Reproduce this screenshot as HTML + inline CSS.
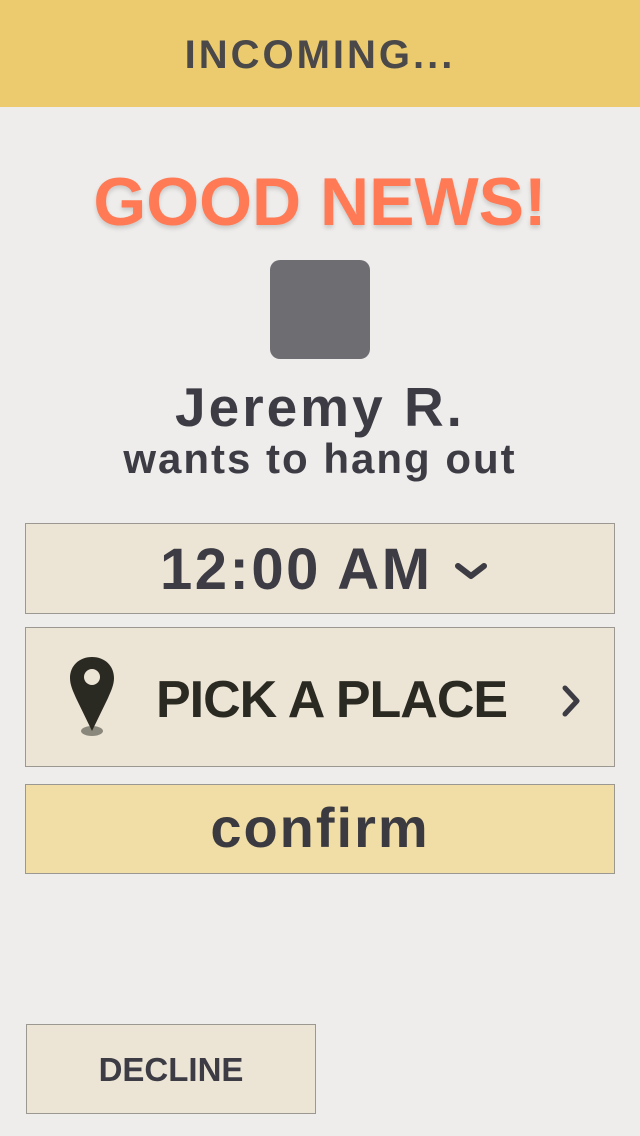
<!DOCTYPE html>
<html><head><style>
body{margin:0;width:640px;height:1136px;background:#eeedeb;font-family:"Liberation Sans",sans-serif;font-weight:bold;position:relative;overflow:hidden}
div{position:absolute;box-sizing:border-box}
.t{left:0;width:640px;text-align:center;white-space:nowrap}
.box{left:25px;width:590px;background:#ece5d6;border:1px solid #9a9890}
</style></head><body>
<div style="left:0;top:0;width:640px;height:107px;background:#eccb6f"></div>
<div class="t" style="top:33px;font-size:40px;letter-spacing:3px;color:#4a4848;line-height:44px">INCOMING...</div>
<div class="t" style="top:164px;font-size:68px;letter-spacing:0px;color:#ff7a55;line-height:76px;text-shadow:0 3px 4px rgba(0,0,0,.15)">GOOD NEWS!</div>
<div style="left:270px;top:260px;width:100px;height:99px;background:#6e6d72;border-radius:10px"></div>
<div class="t" style="top:378px;font-size:55px;letter-spacing:3px;color:#3d3c44;line-height:58px">Jeremy R.</div>
<div class="t" style="top:437px;font-size:42px;letter-spacing:2px;color:#3d3c44;line-height:44px">wants to hang out</div>
<div class="box" style="top:523px;height:91px"></div>
<div style="left:160px;top:538px;font-size:58px;color:#3d3c44;line-height:64px;letter-spacing:2.5px">12:00 AM</div>
<svg style="position:absolute;left:455px;top:562px" width="32" height="20"><path d="M3 4 L16 14 L29 4" stroke="#3d3c44" stroke-width="6" fill="none" stroke-linecap="round" stroke-linejoin="round"/></svg>
<div class="box" style="top:627px;height:140px"></div>
<svg style="position:absolute;left:66px;top:655px" width="54" height="85"><ellipse cx="26" cy="76" rx="11" ry="5" fill="#8a887c"/><path d="M26 2 C13 2 4 11 4 23 C4 30 7 36 10 43 L26 76 L42 43 C45 36 48 30 48 23 C48 11 39 2 26 2 Z" fill="#2b2a22"/><circle cx="26" cy="22" r="8" fill="#ece5d6"/></svg>
<div style="left:156px;top:670px;font-size:52px;color:#2b2a22;line-height:60px;letter-spacing:-1px">PICK A PLACE</div>
<svg style="position:absolute;left:560px;top:684px" width="24" height="34"><path d="M5 4 L17 17 L5 30" stroke="#3d3c44" stroke-width="5" fill="none" stroke-linecap="round" stroke-linejoin="round"/></svg>
<div class="box" style="top:784px;height:90px;background:#f0dea6"></div>
<div class="t" style="top:796px;font-size:56px;letter-spacing:2px;color:#3b3a40;line-height:64px">confirm</div>
<div class="box" style="top:1024px;left:26px;width:290px;height:90px"></div>
<div style="left:26px;width:290px;top:1050px;text-align:center;font-size:33px;color:#3d3c44;line-height:40px">DECLINE</div>
</body></html>
